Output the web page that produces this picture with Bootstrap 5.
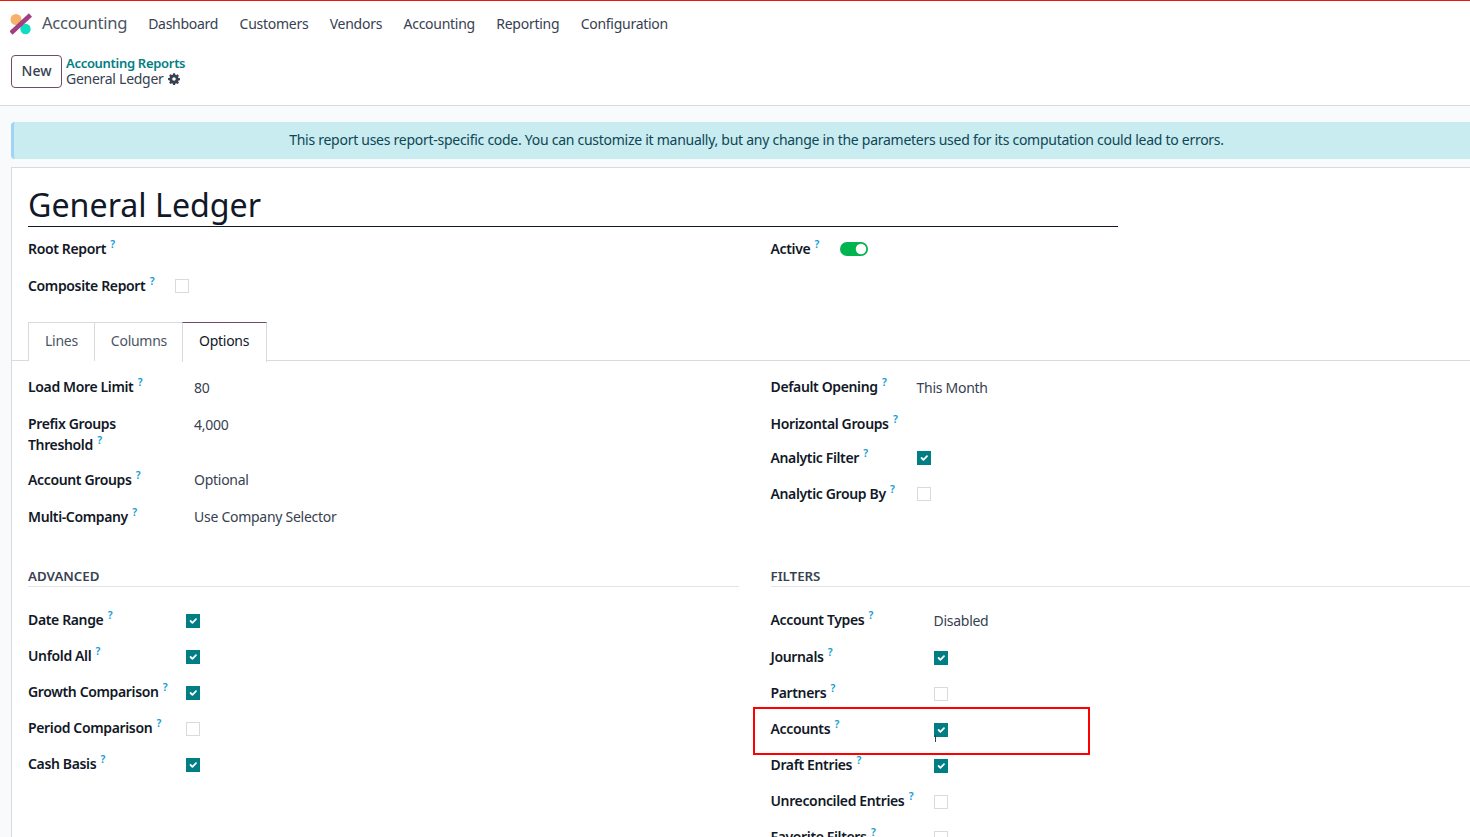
<!DOCTYPE html>
<html lang="en"><head><meta charset="utf-8"><title>General Ledger</title>
<link href="https://cdn.jsdelivr.net/npm/bootstrap@5.3.0/dist/css/bootstrap.min.css" rel="stylesheet">
<style>
html,body{height:100%;overflow:hidden}
body{font-family:"Noto Sans","Liberation Sans",sans-serif;font-size:14px;letter-spacing:-.27px;color:#374151;background:#f9fafb}
.app-frame{position:relative;width:1470px;height:837px;overflow:hidden}
.topbar{height:46px;border-top:1px solid #e6190f;background:#fff;padding-left:10px}
.app-logo{width:22px;height:22px;margin-right:10px}
.app-name{font-size:16.6px;color:#4b5563;margin-right:21px}
.menu-link{font-size:14px;color:#374151;margin-right:21.4px;text-decoration:none}
.ctrl-panel{height:60px;background:#fff;border-bottom:1px solid #d8dadd;padding-left:11px;padding-bottom:8px}
.new-btn{width:51px;height:33px;border:1px solid #714b67;border-radius:4px;background:#fff;color:#374151;font-weight:500;font-size:14px;padding:0 0 2px;margin-right:4px;--bs-btn-hover-bg:#fff}
.crumb-wrap{padding-bottom:2px}
.crumb-top{font-size:13px;font-weight:600;letter-spacing:-.3px;color:#017e84;line-height:16px;text-decoration:none}
.crumb-cur{font-size:14px;color:#374151;line-height:16px}
.gear-icon{width:12px;height:12px;color:#374151}
.content-zone{width:1488px;margin-left:11px;padding-top:16px}
.note-bar{height:37px;background:#c8ecef;border-left:3px solid #9fd4f2;border-radius:4px 0 0 4px;color:#0f4656;font-size:14px;margin-bottom:8px;padding-bottom:2px}
.sheet-box{background:#fff;border:1px solid #d8dadd;height:700px;padding:0 17px 0 16px}
.doc-title{font-size:32.2px;font-weight:400;line-height:38px;color:#111827;width:1090px;border-bottom:1px solid #111827;height:41px;margin:18px 0 0;letter-spacing:0}
.fld{min-height:21px;margin-bottom:16px;line-height:21px}
.fld-label{font-weight:600;color:#111827;font-size:14px;letter-spacing:-.36px}
.hint{font-size:10.5px;color:#0e9bd0;vertical-align:baseline;top:-.6em;line-height:0;font-weight:600;margin-left:1px}
.val{color:#374151}
.val-low{padding-top:1px;margin-bottom:-1px}
.w-left{width:166px}.w-adv{width:158px}.w-right{width:146px}.w-filt{width:163px}
.row-gap{--bs-gutter-x:32px}
.top-fields{padding-top:11px}
.opt-fields{padding-top:15px}
.group-row{padding-top:25px}
.fld-tight{margin-bottom:13px}
.fld-two{margin-bottom:14px}
.fld-mid{margin-bottom:15px}
.fld-adv{margin-bottom:15px}
.fld-adv .box-check.form-check-input{margin-top:2px}
.tab-strip{margin:26px -17px 0 -16px;padding-left:16px;border-bottom:1px solid #d8dadd;height:39px;gap:0}
.tab-item{height:39px;padding:0 16px;border:1px solid #d8dadd;border-bottom:0;margin-left:-1px;line-height:36px;color:#4b5563;font-size:14px;background:#fff}
.tab-item:first-child{margin-left:0}
.tab-mid{padding-right:15px}
.tab-on{color:#111827;border-top-color:#714b67;height:40px;padding-right:17px}
.box-check.form-check-input{width:14px;height:14px;margin:0;border-radius:0;border:1px solid #d8dadd;float:none;flex:none}
.box-check.form-check-input:checked{background-color:#017e84;border-color:#017e84}
.box-check.after-hint,.after-hint{margin-left:21px}
.toggle-on.form-check-input{width:28px;height:14px;margin:0;float:none;background-color:#00b44f;border:0;border-radius:7px}
.form-switch.sw-wrap{padding:0;min-height:0;margin:0 0 0 21px}
.group-head{font-size:13.3px;font-weight:600;letter-spacing:0;color:#374151;border-bottom:1px solid #e2e4e7;height:19px;line-height:17px;margin:0 0 22px}
.mark-box{position:absolute;left:753px;top:707px;width:337px;height:48px;border:2px solid #f00;z-index:5;pointer-events:none}
.caret-tick{position:absolute;left:935px;top:735px;width:1px;height:7px;background:#374151;z-index:6}
</style></head>
<body>
<div class="app-frame">
  <nav class="topbar d-flex align-items-center">
    <svg class="app-logo" viewBox="0 0 22 22"><circle cx="6" cy="6.5" r="5.5" fill="#f6b26b"/><circle cx="15.5" cy="16" r="5.2" fill="#0fdcc0"/><path d="M1 20 20.5 2" stroke="#a33f80" stroke-width="4.6" fill="none"/></svg>
    <span class="app-name">Accounting</span>
    <a class="menu-link" href="#">Dashboard</a><a class="menu-link" href="#">Customers</a><a class="menu-link" href="#">Vendors</a><a class="menu-link" href="#">Accounting</a><a class="menu-link" href="#">Reporting</a><a class="menu-link" href="#">Configuration</a>
  </nav>
  <div class="ctrl-panel d-flex align-items-center">
    <button class="btn new-btn" type="button">New</button>
    <div class="d-flex flex-column crumb-wrap">
      <a class="crumb-top" href="#">Accounting Reports</a>
      <div class="crumb-cur d-flex align-items-center gap-1">General Ledger
        <svg class="gear-icon" viewBox="0 0 16 16" fill="currentColor"><path fill-rule="evenodd" d="M9.4.3 9.8 2.4c.4.1.8.3 1.1.5l1.8-1.2 1.9 1.9-1.2 1.8c.2.4.4.7.5 1.1l2.1.4v2.7l-2.1.4c-.1.4-.3.8-.5 1.1l1.2 1.8-1.9 1.9-1.8-1.2c-.4.2-.7.4-1.1.5l-.4 2.1H6.7l-.4-2.1c-.4-.1-.8-.3-1.1-.5l-1.8 1.2-1.9-1.9 1.2-1.8c-.2-.4-.4-.7-.5-1.1L.1 9.4V6.7l2.1-.4c.1-.4.3-.8.5-1.1L1.5 3.4l1.9-1.9 1.8 1.2c.4-.2.7-.4 1.1-.5L6.7.3zM8 5.6a2.4 2.4 0 1 0 0 4.8 2.4 2.4 0 0 0 0-4.8z"/></svg>
      </div>
    </div>
  </div>
  <div class="content-zone">
    <div class="note-bar d-flex align-items-center justify-content-center">This report uses report-specific code. You can customize it manually, but any change in the parameters used for its computation could lead to errors.</div>
    <div class="sheet-box">
      <h1 class="doc-title">General Ledger</h1>
      <div class="row row-gap top-fields">
        <div class="col-6">
          <div class="fld fld-label">Root Report <sup class="hint">?</sup></div>
          <div class="fld d-flex align-items-center mb-0"><span class="fld-label">Composite Report <sup class="hint">?</sup></span><input class="form-check-input box-check after-hint" type="checkbox"></div>
        </div>
        <div class="col-6">
          <div class="fld d-flex align-items-center"><span class="fld-label">Active <sup class="hint">?</sup></span><span class="form-check form-switch sw-wrap d-flex"><input class="form-check-input toggle-on" type="checkbox" checked></span></div>
        </div>
      </div>
      <div class="tab-strip d-flex">
        <div class="tab-item">Lines</div><div class="tab-item tab-mid">Columns</div><div class="tab-item tab-on">Options</div>
      </div>
      <div class="row row-gap opt-fields">
        <div class="col-6">
          <div class="fld d-flex"><div class="fld-label w-left">Load More Limit <sup class="hint">?</sup></div><div class="val val-low">80</div></div>
          <div class="fld fld-two d-flex"><div class="fld-label w-left">Prefix Groups<br>Threshold <sup class="hint">?</sup></div><div class="val val-low">4,000</div></div>
          <div class="fld d-flex"><div class="fld-label w-left">Account Groups <sup class="hint">?</sup></div><div class="val">Optional</div></div>
          <div class="fld d-flex"><div class="fld-label w-left">Multi-Company <sup class="hint">?</sup></div><div class="val">Use Company Selector</div></div>
        </div>
        <div class="col-6">
          <div class="fld d-flex"><div class="fld-label w-right">Default Opening <sup class="hint">?</sup></div><div class="val val-low">This Month</div></div>
          <div class="fld fld-tight d-flex"><div class="fld-label w-right">Horizontal Groups <sup class="hint">?</sup></div></div>
          <div class="fld fld-mid d-flex align-items-center"><div class="fld-label w-right">Analytic Filter <sup class="hint">?</sup></div><input class="form-check-input box-check" type="checkbox" checked></div>
          <div class="fld d-flex align-items-center"><div class="fld-label w-right">Analytic Group By <sup class="hint">?</sup></div><input class="form-check-input box-check" type="checkbox"></div>
        </div>
      </div>
      <div class="row row-gap group-row">
        <div class="col-6">
          <div class="group-head">ADVANCED</div>
          <div class="fld fld-adv d-flex align-items-center"><div class="fld-label w-adv">Date Range <sup class="hint">?</sup></div><input class="form-check-input box-check" type="checkbox" checked></div>
          <div class="fld fld-adv d-flex align-items-center"><div class="fld-label w-adv">Unfold All <sup class="hint">?</sup></div><input class="form-check-input box-check" type="checkbox" checked></div>
          <div class="fld fld-adv d-flex align-items-center"><div class="fld-label w-adv">Growth Comparison <sup class="hint">?</sup></div><input class="form-check-input box-check" type="checkbox" checked></div>
          <div class="fld fld-adv d-flex align-items-center"><div class="fld-label w-adv">Period Comparison <sup class="hint">?</sup></div><input class="form-check-input box-check" type="checkbox"></div>
          <div class="fld fld-adv d-flex align-items-center"><div class="fld-label w-adv">Cash Basis <sup class="hint">?</sup></div><input class="form-check-input box-check" type="checkbox" checked></div>
        </div>
        <div class="col-6">
          <div class="group-head">FILTERS</div>
          <div class="fld d-flex"><div class="fld-label w-filt">Account Types <sup class="hint">?</sup></div><div class="val val-low">Disabled</div></div>
          <div class="fld fld-adv d-flex align-items-center"><div class="fld-label w-filt">Journals <sup class="hint">?</sup></div><input class="form-check-input box-check" type="checkbox" checked></div>
          <div class="fld fld-adv d-flex align-items-center"><div class="fld-label w-filt">Partners <sup class="hint">?</sup></div><input class="form-check-input box-check" type="checkbox"></div>
          <div class="fld fld-adv d-flex align-items-center"><div class="fld-label w-filt">Accounts <sup class="hint">?</sup></div><input class="form-check-input box-check" type="checkbox" checked></div>
          <div class="fld fld-adv d-flex align-items-center"><div class="fld-label w-filt">Draft Entries <sup class="hint">?</sup></div><input class="form-check-input box-check" type="checkbox" checked></div>
          <div class="fld fld-adv d-flex align-items-center"><div class="fld-label w-filt">Unreconciled Entries <sup class="hint">?</sup></div><input class="form-check-input box-check" type="checkbox"></div>
          <div class="fld fld-adv d-flex align-items-center"><div class="fld-label w-filt">Favorite Filters <sup class="hint">?</sup></div><input class="form-check-input box-check" type="checkbox"></div>
        </div>
      </div>
    </div>
  </div>
  <div class="mark-box"></div>
  <div class="caret-tick"></div>
</div>
<script src="https://cdn.jsdelivr.net/npm/bootstrap@5.3.0/dist/js/bootstrap.bundle.min.js"></script>
</body></html>
